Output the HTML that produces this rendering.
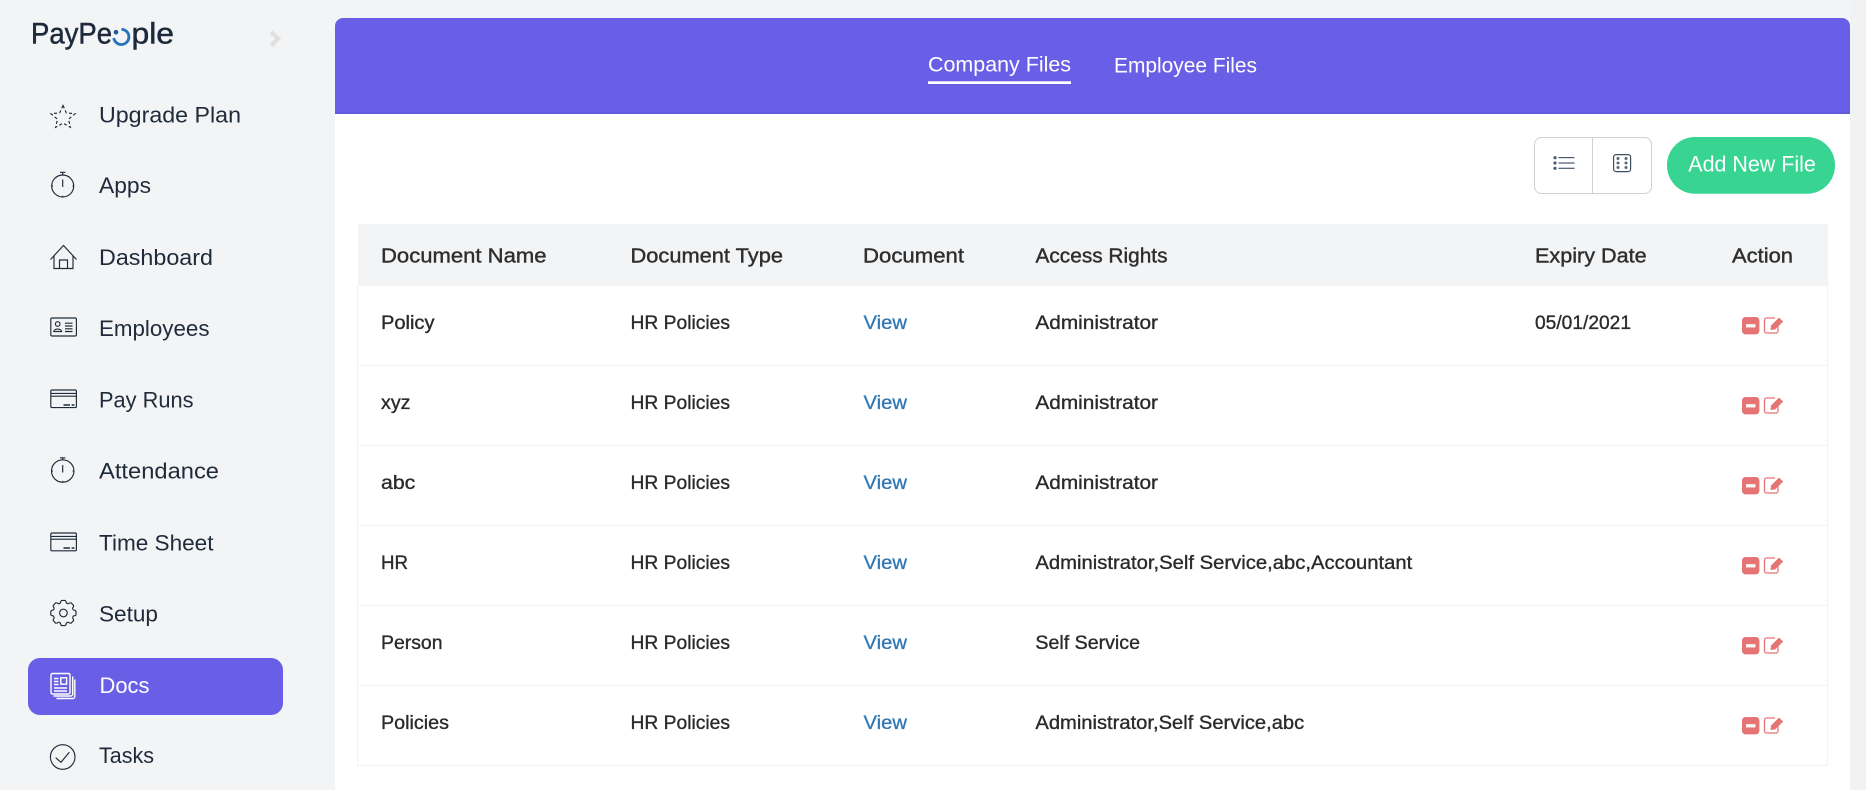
<!DOCTYPE html>
<html><head><meta charset="utf-8"><title>Docs</title>
<style>
html,body{margin:0;padding:0;width:1866px;height:790px;overflow:hidden;background:#f3f4f6}
svg{display:block}
text{font-family:"Liberation Sans",sans-serif}
.s{font-size:22px;fill:#1f2a3a}
.h{font-size:20.5px;fill:#2e2e2e;stroke:#2e2e2e;stroke-width:.4}
.c{font-size:19.5px;fill:#2a2a2a;stroke:#2a2a2a;stroke-width:.35}
.l{font-size:19.5px;fill:#2f78b5;stroke:#2f78b5;stroke-width:.3}
.ic{fill:none;stroke:#1f2a3a;stroke-width:1.15}
</style></head><body>
<svg width="1866" height="790" viewBox="0 0 1866 790" xmlns="http://www.w3.org/2000/svg">
<rect width="1866" height="790" fill="#f3f4f6"/>
<rect x="1850" width="16" height="790" fill="#f1f2f4"/>
<rect x="335" y="18" width="1515" height="772" rx="8" fill="#fff"/>
<rect x="335" y="112" width="1515" height="678" fill="#fff"/>
<path d="M335 114V26a8 8 0 0 1 8-8H1842a8 8 0 0 1 8 8V114Z" fill="#695fe7"/>
<rect x="335" y="112.6" width="1515" height="1.4" fill="#6057d8"/>

<!-- Logo -->
<text x="31" y="43.3" font-size="30" fill="#1e2a3c" stroke="#1e2a3c" stroke-width=".5" textLength="81" lengthAdjust="spacingAndGlyphs">PayPe</text>
<path d="M121.5 29.3A7.6 7.6 0 1 1 113.8 38" fill="none" stroke="#2672bd" stroke-width="2.8"/>
<circle cx="116" cy="32.2" r="2.3" fill="#1c5a9c"/>
<text x="131.5" y="43.3" font-size="30" fill="#1e2a3c" stroke="#1e2a3c" stroke-width=".5" textLength="42.5" lengthAdjust="spacingAndGlyphs">ple</text>
<polyline points="271,32 278,38.5 271,46" fill="none" stroke="#e2dfe0" stroke-width="4.5"/>

<!-- Sidebar -->
<rect x="28" y="658" width="255" height="57" rx="12" fill="#695fe7"/>
<text class="s" x="99" y="122.5" textLength="142" lengthAdjust="spacingAndGlyphs">Upgrade Plan</text>
<text class="s" x="99" y="193.2" textLength="52" lengthAdjust="spacingAndGlyphs">Apps</text>
<text class="s" x="99" y="265" textLength="114" lengthAdjust="spacingAndGlyphs">Dashboard</text>
<text class="s" x="99" y="336" textLength="110.5" lengthAdjust="spacingAndGlyphs">Employees</text>
<text class="s" x="99" y="407.5" textLength="94.5" lengthAdjust="spacingAndGlyphs">Pay Runs</text>
<text class="s" x="99" y="478.5" textLength="120" lengthAdjust="spacingAndGlyphs">Attendance</text>
<text class="s" x="99" y="550.5" textLength="114.5" lengthAdjust="spacingAndGlyphs">Time Sheet</text>
<text class="s" x="99" y="621.5" textLength="59" lengthAdjust="spacingAndGlyphs">Setup</text>
<text class="s" x="99.5" y="693" textLength="50" lengthAdjust="spacingAndGlyphs" style="fill:#fff">Docs</text>
<text class="s" x="99" y="763" textLength="55" lengthAdjust="spacingAndGlyphs">Tasks</text>

<!-- Star -->
<path class="ic" stroke-dasharray="3 2.4" d="M63 105.5L66.3 112.8L75 113.8L68.5 119.2L70.4 127.3L63 123.2L55.6 127.3L57.5 119.2L51 113.8L59.7 112.8Z"/>
<!-- Apps watch -->
<g class="ic"><circle cx="62.7" cy="186" r="11"/><path d="M62.7 175V172.5M60 172.3H65.4M62.7 179.5V187M51.7 186H53M73.7 186H72.4M62.7 197V195.7"/></g>
<!-- House -->
<g class="ic"><path d="M50.5 259.5L63.5 245.5L76.5 259.5"/><path d="M54 256V268.5H73V256"/><path d="M59.5 268.5V260H67.5V268.5"/></g>
<!-- ID -->
<g class="ic"><rect x="50.8" y="318" width="25.6" height="18" rx="1.2"/><circle cx="57.7" cy="324" r="2.3"/><path d="M53.8 331.5c0-3.2 7.8-3.2 7.8 0z"/><path d="M65 323.2H72.5M65 326H72.5M65 328.8H72.5M65 331.5H72.5"/></g>
<!-- Card -->
<g class="ic"><rect x="50.8" y="390" width="25.6" height="17.6" rx="1.2"/><path d="M50.8 393.4H76.4M50.8 396.2H76.4"/><path d="M63.5 405H70M71.6 405H74.4" stroke-width="1.5"/></g>
<!-- Attendance watch -->
<g class="ic"><circle cx="62.7" cy="471" r="11.2"/><path d="M62.7 459.8V458M60 457.8H65.4M62.7 465V472.5M51.5 471H52.8M73.9 471H72.6M62.7 482.2V480.9"/></g>
<!-- Time sheet card -->
<g class="ic"><rect x="50.8" y="533" width="25.6" height="17.8" rx="1.2"/><path d="M50.8 536.4H76.4M50.8 539.2H76.4"/><path d="M63.5 548H70M71.6 548H74.4" stroke-width="1.5"/></g>
<!-- Gear -->
<g class="ic" transform="translate(63.4 613)">
<circle r="3.8"/>
<path d="M-3.2 -9.8C-2.8 -10 -2.8 -12.6 -1.6 -12.6L1.6 -12.6C2.8 -12.6 2.8 -10 3.2 -9.8A10.3 10.3 0 0 1 4.67 -9.19"/>
<path transform="rotate(45)" d="M-3.2 -9.8C-2.8 -10 -2.8 -12.6 -1.6 -12.6L1.6 -12.6C2.8 -12.6 2.8 -10 3.2 -9.8A10.3 10.3 0 0 1 4.67 -9.19"/>
<path transform="rotate(90)" d="M-3.2 -9.8C-2.8 -10 -2.8 -12.6 -1.6 -12.6L1.6 -12.6C2.8 -12.6 2.8 -10 3.2 -9.8A10.3 10.3 0 0 1 4.67 -9.19"/>
<path transform="rotate(135)" d="M-3.2 -9.8C-2.8 -10 -2.8 -12.6 -1.6 -12.6L1.6 -12.6C2.8 -12.6 2.8 -10 3.2 -9.8A10.3 10.3 0 0 1 4.67 -9.19"/>
<path transform="rotate(180)" d="M-3.2 -9.8C-2.8 -10 -2.8 -12.6 -1.6 -12.6L1.6 -12.6C2.8 -12.6 2.8 -10 3.2 -9.8A10.3 10.3 0 0 1 4.67 -9.19"/>
<path transform="rotate(225)" d="M-3.2 -9.8C-2.8 -10 -2.8 -12.6 -1.6 -12.6L1.6 -12.6C2.8 -12.6 2.8 -10 3.2 -9.8A10.3 10.3 0 0 1 4.67 -9.19"/>
<path transform="rotate(270)" d="M-3.2 -9.8C-2.8 -10 -2.8 -12.6 -1.6 -12.6L1.6 -12.6C2.8 -12.6 2.8 -10 3.2 -9.8A10.3 10.3 0 0 1 4.67 -9.19"/>
<path transform="rotate(315)" d="M-3.2 -9.8C-2.8 -10 -2.8 -12.6 -1.6 -12.6L1.6 -12.6C2.8 -12.6 2.8 -10 3.2 -9.8A10.3 10.3 0 0 1 4.67 -9.19"/>
</g>
<!-- Docs -->
<g fill="none" stroke="#fff" stroke-width="1.4">
<rect x="51" y="673.5" width="19" height="20.5" rx="1.5"/>
<path d="M72.7 676.5V694a2 2 0 0 1-2 2H53.5"/>
<path d="M74.8 679.5V696.5a2 2 0 0 1-2 2H56.5"/>
<path d="M54 678.5H58.5M54 681.5H58.5M54 684.5H58.5M54 688H67M54 691H67"/>
<rect x="60.8" y="677.8" width="5.8" height="6.4"/>
</g>
<!-- Tasks -->
<g class="ic"><circle cx="62.7" cy="757" r="12.3"/><path d="M55.7 757.7L61 762.3L69.3 752.3"/></g>

<!-- Tabs -->
<text x="928" y="71.5" font-size="21.5" fill="#fff" textLength="143" lengthAdjust="spacingAndGlyphs">Company Files</text>
<rect x="928" y="81.3" width="143" height="2.7" fill="#fff"/>
<text x="1114" y="72.5" font-size="21.5" fill="#fff" textLength="143" lengthAdjust="spacingAndGlyphs">Employee Files</text>

<!-- Toolbar -->
<rect x="1534.5" y="137.5" width="117" height="56" rx="7" fill="#fff" stroke="#d0d0d0" stroke-width="1"/>
<path d="M1592.5 137.5V193.5" stroke="#d0d0d0" stroke-width="1"/>
<g fill="#4a5a70"><circle cx="1555" cy="157.7" r="1.6"/><circle cx="1555" cy="163" r="1.6"/><circle cx="1555" cy="168.3" r="1.6"/>
<rect x="1558.5" y="157" width="16" height="1.2"/><rect x="1558.5" y="162.4" width="16" height="1.2"/><rect x="1558.5" y="167.7" width="16" height="1.2"/></g>
<rect x="1613.6" y="154.6" width="17" height="17" rx="2.5" fill="none" stroke="#3f4f66" stroke-width="1.2"/>
<g fill="#5b6675"><circle cx="1618" cy="158.5" r="1.5"/><circle cx="1626" cy="158.5" r="1.5"/><circle cx="1618" cy="163" r="1.5"/><circle cx="1626" cy="163" r="1.5"/><circle cx="1618" cy="167.5" r="1.5"/><circle cx="1626" cy="167.5" r="1.5"/></g>
<rect x="1667" y="137" width="168" height="56.7" rx="28" fill="#38d592"/>
<text x="1688.3" y="171.7" font-size="22" fill="#fff" textLength="127.5" lengthAdjust="spacingAndGlyphs">Add New File</text>

<!-- Table -->
<rect x="358" y="224" width="1470" height="62" fill="#f3f4f6"/>
<g stroke="#f1f2f3" stroke-width="1" fill="none">
<path d="M357.5 286V765.5H1827.5V224"/>
<path d="M357.5 365.5H1827.5M357.5 445.5H1827.5M357.5 525.5H1827.5M357.5 605.5H1827.5M357.5 685.5H1827.5"/>
</g>
<text class="h" x="381" y="262.7" textLength="165.5" lengthAdjust="spacingAndGlyphs">Document Name</text>
<text class="h" x="630.5" y="262.7" textLength="152.5" lengthAdjust="spacingAndGlyphs">Document Type</text>
<text class="h" x="863" y="262.7" textLength="101" lengthAdjust="spacingAndGlyphs">Document</text>
<text class="h" x="1035.5" y="262.7" textLength="132" lengthAdjust="spacingAndGlyphs">Access Rights</text>
<text class="h" x="1535" y="262.7" textLength="111.7" lengthAdjust="spacingAndGlyphs">Expiry Date</text>
<text class="h" x="1732" y="262.7" textLength="61" lengthAdjust="spacingAndGlyphs">Action</text>

<!-- Row 1 -->
<text class="c" x="381" y="329" textLength="53.5" lengthAdjust="spacingAndGlyphs">Policy</text>
<text class="c" x="630.5" y="329" textLength="99.5" lengthAdjust="spacingAndGlyphs">HR Policies</text>
<text class="l" x="863.5" y="329" textLength="43.5" lengthAdjust="spacingAndGlyphs">View</text>
<text class="c" x="1035.4" y="329" textLength="122.6" lengthAdjust="spacingAndGlyphs">Administrator</text>
<text class="c" x="1535" y="329" textLength="96" lengthAdjust="spacingAndGlyphs">05/01/2021</text>
<!-- Row 2 -->
<text class="c" x="381" y="409" textLength="29.5" lengthAdjust="spacingAndGlyphs">xyz</text>
<text class="c" x="630.5" y="409" textLength="99.5" lengthAdjust="spacingAndGlyphs">HR Policies</text>
<text class="l" x="863.5" y="409" textLength="43.5" lengthAdjust="spacingAndGlyphs">View</text>
<text class="c" x="1035.4" y="409" textLength="122.6" lengthAdjust="spacingAndGlyphs">Administrator</text>
<!-- Row 3 -->
<text class="c" x="381" y="489" textLength="34.3" lengthAdjust="spacingAndGlyphs">abc</text>
<text class="c" x="630.5" y="489" textLength="99.5" lengthAdjust="spacingAndGlyphs">HR Policies</text>
<text class="l" x="863.5" y="489" textLength="43.5" lengthAdjust="spacingAndGlyphs">View</text>
<text class="c" x="1035.4" y="489" textLength="122.6" lengthAdjust="spacingAndGlyphs">Administrator</text>
<!-- Row 4 -->
<text class="c" x="381" y="569" textLength="27" lengthAdjust="spacingAndGlyphs">HR</text>
<text class="c" x="630.5" y="569" textLength="99.5" lengthAdjust="spacingAndGlyphs">HR Policies</text>
<text class="l" x="863.5" y="569" textLength="43.5" lengthAdjust="spacingAndGlyphs">View</text>
<text class="c" x="1035.4" y="569" textLength="376.9" lengthAdjust="spacingAndGlyphs">Administrator,Self Service,abc,Accountant</text>
<!-- Row 5 -->
<text class="c" x="381" y="649" textLength="61.5" lengthAdjust="spacingAndGlyphs">Person</text>
<text class="c" x="630.5" y="649" textLength="99.5" lengthAdjust="spacingAndGlyphs">HR Policies</text>
<text class="l" x="863.5" y="649" textLength="43.5" lengthAdjust="spacingAndGlyphs">View</text>
<text class="c" x="1035.4" y="649" textLength="104.6" lengthAdjust="spacingAndGlyphs">Self Service</text>
<!-- Row 6 -->
<text class="c" x="381" y="729" textLength="68" lengthAdjust="spacingAndGlyphs">Policies</text>
<text class="c" x="630.5" y="729" textLength="99.5" lengthAdjust="spacingAndGlyphs">HR Policies</text>
<text class="l" x="863.5" y="729" textLength="43.5" lengthAdjust="spacingAndGlyphs">View</text>
<text class="c" x="1035.4" y="729" textLength="268.8" lengthAdjust="spacingAndGlyphs">Administrator,Self Service,abc</text>

<!-- Action icons -->
<g transform="translate(0 0)"><rect x="1742" y="317" width="17.4" height="17.4" rx="3.5" fill="#e57575"/><rect x="1746" y="324.2" width="9.4" height="3.2" fill="#fff"/><path d="M1778 325.5V331a2 2 0 0 1-2 2H1766.5a2 2 0 0 1-2-2V320a2 2 0 0 1 2-2H1775" fill="none" stroke="#e57575" stroke-width="1.3"/><path d="M1771 325.5L1779 317.6L1783.2 321.5L1775 329.5L1770.5 330Z" fill="#e57575"/></g>
<g transform="translate(0 80)"><rect x="1742" y="317" width="17.4" height="17.4" rx="3.5" fill="#e57575"/><rect x="1746" y="324.2" width="9.4" height="3.2" fill="#fff"/><path d="M1778 325.5V331a2 2 0 0 1-2 2H1766.5a2 2 0 0 1-2-2V320a2 2 0 0 1 2-2H1775" fill="none" stroke="#e57575" stroke-width="1.3"/><path d="M1771 325.5L1779 317.6L1783.2 321.5L1775 329.5L1770.5 330Z" fill="#e57575"/></g>
<g transform="translate(0 160)"><rect x="1742" y="317" width="17.4" height="17.4" rx="3.5" fill="#e57575"/><rect x="1746" y="324.2" width="9.4" height="3.2" fill="#fff"/><path d="M1778 325.5V331a2 2 0 0 1-2 2H1766.5a2 2 0 0 1-2-2V320a2 2 0 0 1 2-2H1775" fill="none" stroke="#e57575" stroke-width="1.3"/><path d="M1771 325.5L1779 317.6L1783.2 321.5L1775 329.5L1770.5 330Z" fill="#e57575"/></g>
<g transform="translate(0 240)"><rect x="1742" y="317" width="17.4" height="17.4" rx="3.5" fill="#e57575"/><rect x="1746" y="324.2" width="9.4" height="3.2" fill="#fff"/><path d="M1778 325.5V331a2 2 0 0 1-2 2H1766.5a2 2 0 0 1-2-2V320a2 2 0 0 1 2-2H1775" fill="none" stroke="#e57575" stroke-width="1.3"/><path d="M1771 325.5L1779 317.6L1783.2 321.5L1775 329.5L1770.5 330Z" fill="#e57575"/></g>
<g transform="translate(0 320)"><rect x="1742" y="317" width="17.4" height="17.4" rx="3.5" fill="#e57575"/><rect x="1746" y="324.2" width="9.4" height="3.2" fill="#fff"/><path d="M1778 325.5V331a2 2 0 0 1-2 2H1766.5a2 2 0 0 1-2-2V320a2 2 0 0 1 2-2H1775" fill="none" stroke="#e57575" stroke-width="1.3"/><path d="M1771 325.5L1779 317.6L1783.2 321.5L1775 329.5L1770.5 330Z" fill="#e57575"/></g>
<g transform="translate(0 400)"><rect x="1742" y="317" width="17.4" height="17.4" rx="3.5" fill="#e57575"/><rect x="1746" y="324.2" width="9.4" height="3.2" fill="#fff"/><path d="M1778 325.5V331a2 2 0 0 1-2 2H1766.5a2 2 0 0 1-2-2V320a2 2 0 0 1 2-2H1775" fill="none" stroke="#e57575" stroke-width="1.3"/><path d="M1771 325.5L1779 317.6L1783.2 321.5L1775 329.5L1770.5 330Z" fill="#e57575"/></g>
</svg>
</body></html>
